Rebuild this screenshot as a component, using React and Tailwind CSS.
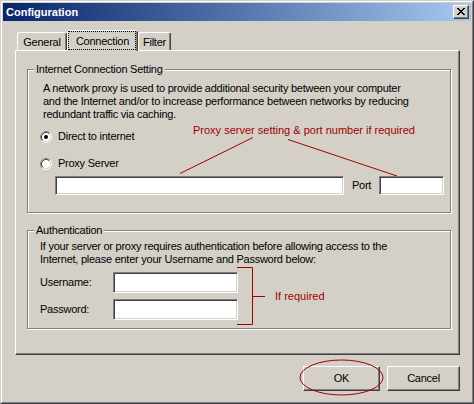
function CloseBtn() {
  return (
    <div className="w-[16px] h-[14px] bg-[#d4d0c8] border border-t-white border-l-white border-r-[#404040] border-b-[#404040] shadow-[inset_-1px_-1px_0_#808080] pl-[3px] pt-[2px]">
      <svg width="8" height="7" viewBox="0 0 8 7" shapeRendering="crispEdges" className="block">
        <path d="M0 0h2v1H0zM6 0h2v1H6zM1 1h2v1H1zM5 1h2v1H5zM2 2h4v1H2zM3 3h2v1H3zM2 4h4v1H2zM1 5h2v1H1zM5 5h2v1H5zM0 6h2v1H0zM6 6h2v1H6z" fill="#000" />
      </svg>
    </div>
  );
}

function Radio({ checked }) {
  return (
    <svg width="12" height="12" viewBox="0 0 12 12" className="block shrink-0">
      <circle cx="6" cy="6" r="5" fill="#fff" />
      <path d="M2.11 9.89 A5.5 5.5 0 0 1 9.89 2.11" fill="none" stroke="#808080" strokeWidth="1" />
      <path d="M9.89 2.11 A5.5 5.5 0 0 1 2.11 9.89" fill="none" stroke="#ffffff" strokeWidth="1" />
      <path d="M2.82 9.18 A4.5 4.5 0 0 1 9.18 2.82" fill="none" stroke="#404040" strokeWidth="1" />
      <path d="M9.18 2.82 A4.5 4.5 0 0 1 2.82 9.18" fill="none" stroke="#d4d0c8" strokeWidth="1" />
      {checked && <circle cx="6" cy="6" r="2" fill="#000" />}
    </svg>
  );
}

export default function App() {
  return (
    <div className="relative w-[474px] h-[404px] bg-[#d4d0c8] font-['Liberation_Sans',Arial,sans-serif] text-[11px] leading-[13px] tracking-[-0.25px] text-black overflow-hidden select-none">
      <div className="h-full border border-t-[#d4d0c8] border-l-[#d4d0c8] border-r-[#404040] border-b-[#404040]">
        <div className="h-full border border-t-white border-l-white border-r-[#808080] border-b-[#808080] p-[1px] flex flex-col">
          {/* Title bar */}
          <div className="h-[18px] shrink-0 flex items-center justify-between bg-linear-to-r from-[#0a246a] to-[#a6caf0] pl-[3px] pr-[2px]">
            <span className="text-white font-bold text-[11px] leading-[13px] tracking-normal">Configuration</span>
            <CloseBtn />
          </div>

          {/* Tabs */}
          <div className="mt-[9px] mb-[-1px] ml-[12px] pl-[2px] h-[21px] flex items-end">
            <div className="w-[50px] h-[19px] bg-[#d4d0c8] border-t border-l border-r border-t-white border-l-white border-r-[#404040] rounded-tl-[3px] rounded-tr-[3px] shadow-[inset_-1px_0_0_#808080] flex justify-center pt-[3px]">
              General
            </div>
            <div className="relative z-10 w-[71px] h-[21px] bg-[#d4d0c8] border-t border-l border-r border-t-white border-l-white border-r-[#404040] rounded-tl-[3px] rounded-tr-[3px] shadow-[inset_-1px_0_0_#808080] flex justify-center pt-[4px]">
              <div className="absolute left-0 top-0 right-[1px] bottom-[1px] border border-dotted border-black"></div>
              Connection
            </div>
            <div className="w-[33px] h-[19px] bg-[#d4d0c8] border-t border-l border-r border-t-white border-l-white border-r-[#404040] rounded-tl-[3px] rounded-tr-[3px] shadow-[inset_-1px_0_0_#808080] flex justify-center pt-[3px]">
              Filter
            </div>
          </div>

          {/* Panel */}
          <div className="ml-[12px] w-[445px] h-[305px] shrink-0 border border-t-white border-l-white border-r-[#404040] border-b-[#404040] shadow-[inset_-1px_-1px_0_#808080] pl-[11px] pt-[12px]">
            <fieldset className="w-[424px] m-0 p-0 border border-[#808080] shadow-[inset_1px_1px_0_#fff,1px_1px_0_#fff]">
              <legend className="ml-[6px] px-[2px] bg-[#d4d0c8] leading-[13px]">Internet Connection Setting</legend>
              <div className="pl-[15px] pt-[6px] pb-[17px] pr-[6px]">
                <p className="whitespace-nowrap">
                  A network proxy is used to provide additional security between your computer
                  <br />
                  and the Internet and/or to increase performance between networks by reducing
                  <br />
                  redundant traffic via caching.
                </p>
                <div className="mt-[9px] ml-[-3px] h-[13px] flex items-center">
                  <Radio checked />
                  <span className="ml-[6px]">Direct to internet</span>
                </div>
                <div className="mt-[14px] ml-[-3px] h-[13px] flex items-center">
                  <Radio />
                  <span className="ml-[6px]">Proxy Server</span>
                </div>
                <div className="mt-[6px] ml-[12px] flex items-center">
                  <div className="w-[289px] h-[19px] bg-white border border-t-[#808080] border-l-[#808080] border-r-white border-b-white shadow-[inset_1px_1px_0_#404040,inset_-1px_-1px_0_#d4d0c8]"></div>
                  <span className="ml-[8px]">Port</span>
                  <div className="ml-auto w-[65px] h-[19px] bg-white border border-t-[#808080] border-l-[#808080] border-r-white border-b-white shadow-[inset_1px_1px_0_#404040,inset_-1px_-1px_0_#d4d0c8]"></div>
                </div>
              </div>
            </fieldset>

            <fieldset className="mt-[11px] w-[424px] m-0 p-0 border border-[#808080] shadow-[inset_1px_1px_0_#fff,1px_1px_0_#fff]">
              <legend className="ml-[6px] px-[2px] bg-[#d4d0c8] leading-[13px]">Authentication</legend>
              <div className="pl-[12px] pt-[3px] pb-[8px]">
                <p className="whitespace-nowrap">
                  If your server or proxy requires authentication before allowing access to the
                  <br />
                  Internet, please enter your Username and Password below:
                </p>
                <div className="mt-[6px] flex items-center">
                  <span className="w-[73px]">Username:</span>
                  <div className="w-[125px] h-[21px] bg-white border border-t-[#808080] border-l-[#808080] border-r-white border-b-white shadow-[inset_1px_1px_0_#404040,inset_-1px_-1px_0_#d4d0c8]"></div>
                </div>
                <div className="mt-[6px] flex items-center">
                  <span className="w-[73px]">Password:</span>
                  <div className="w-[125px] h-[21px] bg-white border border-t-[#808080] border-l-[#808080] border-r-white border-b-white shadow-[inset_1px_1px_0_#404040,inset_-1px_-1px_0_#d4d0c8]"></div>
                </div>
              </div>
            </fieldset>
          </div>

          {/* Buttons */}
          <div className="ml-[12px] w-[445px] mt-[11px] flex justify-end gap-[7px]">
            <button className="w-[77px] h-[25px] bg-[#d4d0c8] border border-t-white border-l-white border-r-[#404040] border-b-[#404040] shadow-[inset_-1px_-1px_0_#808080] text-[11px] leading-[13px]">
              OK
            </button>
            <button className="w-[73px] h-[25px] bg-[#d4d0c8] border border-t-white border-l-white border-r-[#404040] border-b-[#404040] shadow-[inset_-1px_-1px_0_#808080] text-[11px] leading-[13px]">
              Cancel
            </button>
          </div>
        </div>
      </div>

      {/* Red annotations overlay */}
      <svg className="absolute left-0 top-0 w-[474px] h-[404px] pointer-events-none" width="474" height="404" viewBox="0 0 474 404">
        <ellipse cx="101.5" cy="42.5" rx="32.5" ry="7.5" fill="none" stroke="#a00000" strokeWidth="1" />
        <ellipse cx="341.5" cy="377.5" rx="41.5" ry="17.5" fill="none" stroke="#a00000" strokeWidth="1" />
        <line x1="180" y1="173.5" x2="253" y2="137.5" stroke="#a00000" strokeWidth="1" />
        <line x1="288" y1="139.5" x2="397" y2="176" stroke="#a00000" strokeWidth="1" />
        <path d="M237 267.5 H252.5 V324.5 H237 M252.5 296.5 H265" fill="none" stroke="#a00000" strokeWidth="1" />
      </svg>
      <span className="absolute left-[193px] top-[124px] text-[11px] leading-[13px] tracking-normal text-[#a00000] whitespace-nowrap pointer-events-none">
        Proxy server setting &amp; port number if required
      </span>
      <span className="absolute left-[275px] top-[290px] text-[11px] leading-[13px] tracking-normal text-[#a00000] whitespace-nowrap pointer-events-none">
        If required
      </span>
    </div>
  );
}
